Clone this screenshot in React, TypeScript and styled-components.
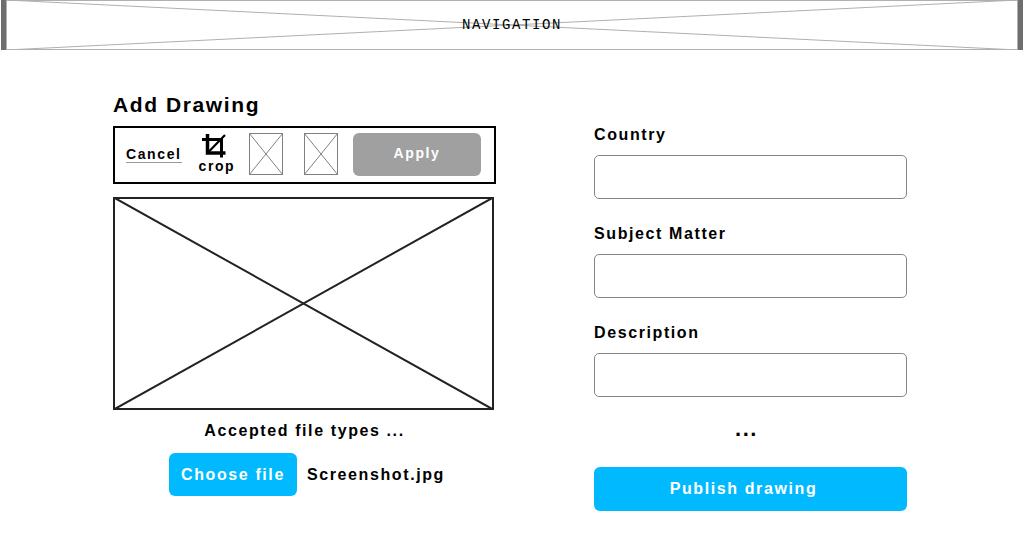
import React from "react";
import styled, { createGlobalStyle } from "styled-components";

const GlobalStyle = createGlobalStyle`
  *, *::before, *::after { box-sizing: border-box; }
  body {
    margin: 0;
    background: #fff;
    color: #000;
    font-family: "Liberation Sans", Arial, Helvetica, sans-serif;
    font-size: 16px;
    font-weight: 700;
    line-height: 20px;
    letter-spacing: 0.1em;
  }
  button, input { font: inherit; letter-spacing: inherit; }
`;

const Navigation = styled.nav`
  display: grid;
  height: 50px;
  margin: 0 1px;
  border: solid #6c6f6e;
  border-width: 0 5px;
`;

const Cross = styled.svg`
  display: block;
  grid-area: 1 / 1;
  width: 100%;
  height: 100%;
`;

const NavTitle = styled.span`
  grid-area: 1 / 1;
  place-self: center;
  font-family: "Liberation Mono", "Courier New", monospace;
  font-size: 14px;
  font-weight: 400;
`;

const Page = styled.main`
  display: grid;
  grid-template-columns: 383fr 313fr;
  gap: 98px;
  padding: 43px 117px 28px 113px;
`;

const Editor = styled.section`
  display: flex;
  flex-direction: column;
`;

const Title = styled.h1`
  margin: 0 0 9px;
  font-size: 21px;
  line-height: 24px;
`;

const Toolbar = styled.div`
  display: flex;
  align-items: center;
  height: 58px;
  padding: 0 13px 2px 11px;
  border: 2px solid #000;
  font-size: 14px;
  line-height: 16px;
`;

const CancelLink = styled.a`
  color: inherit;
  text-decoration: none;
  border-bottom: 1px solid #999;
`;

const CropButton = styled.button`
  display: flex;
  flex-direction: column;
  align-items: flex-start;
  margin-left: 17px;
  padding: 0;
  border: 0;
  background: none;
  color: inherit;

  svg { margin-left: 3px; }
`;

const ToolButton = styled.button`
  width: 34px;
  height: 42px;
  padding: 0;
  border: 0;
  background: none;
`;

const Tools = styled.div`
  display: flex;
  gap: 21px;
  margin-left: 14px;
`;

const Button = styled.button<{ $tone?: string }>`
  min-width: 128px;
  height: 43px;
  padding: 0 12px;
  border: 0;
  border-radius: 6px;
  background: ${(p) => p.$tone ?? "#00b9ff"};
  color: #fff;
  white-space: nowrap;
`;

const ApplyButton = styled(Button)`
  margin-left: auto;
  padding-bottom: 2px;
`;

const PublishButton = styled(Button)`
  height: 44px;
  padding-right: 26px;
`;

const Preview = styled.div`
  height: 213px;
  margin: 13px 2px 0 0;
`;

const Hint = styled.p`
  margin: 11px 0 12px;
  text-align: center;
`;

const FileRow = styled.div`
  display: flex;
  align-items: center;
  gap: 10px;
  padding-left: 56px;
`;

const Form = styled.form`
  display: flex;
  flex-direction: column;
  gap: 25px;
  padding-top: 32px;
`;

const Field = styled.div`
  display: flex;
  flex-direction: column;
  gap: 10px;
`;

const TextInput = styled.input`
  width: 100%;
  height: 44px;
  padding: 0 12px;
  border: 1px solid #858585;
  border-radius: 5px;
  background: #fff;
`;

const More = styled.p`
  margin: 0 0 6px;
  padding-right: 8px;
  font-size: 22px;
  line-height: 14px;
  text-align: center;
`;

const fields = [
  { id: "country", label: "Country" },
  { id: "subject", label: "Subject Matter" },
  { id: "description", label: "Description" },
];

function CrossLines({ color, width = 1 }: { color: string; width?: number }) {
  return (
    <Cross aria-hidden="true" stroke={color} strokeWidth={width} fill="none">
      <line x1="0" y1="0" x2="100%" y2="100%" />
      <line x1="0" y1="100%" x2="100%" y2="0" />
      <rect x="0" y="0" width="100%" height="100%" strokeWidth={width * 2} />
    </Cross>
  );
}

function CropIcon() {
  return (
    <svg width="24" height="24" viewBox="0 0 24 24" fill="none" stroke="#000" aria-hidden="true">
      <path d="M5.500 0V19H23.500" strokeWidth="3.500" />
      <path d="M0 5.500H19.500V23.500" strokeWidth="3" />
      <path d="M6 18.500 23 1" strokeWidth="2.200" />
    </svg>
  );
}

export default function App() {
  return (
    <>
      <GlobalStyle />
      <Navigation>
        <CrossLines color="#b0b0b0" />
        <NavTitle>NAVIGATION</NavTitle>
      </Navigation>
      <Page>
        <Editor>
          <Title>Add Drawing</Title>
          <Toolbar>
            <CancelLink href="#cancel">Cancel</CancelLink>
            <CropButton type="button">
              <CropIcon />
              crop
            </CropButton>
            <Tools>
              <ToolButton type="button" aria-label="Tool one">
                <CrossLines color="#808080" />
              </ToolButton>
              <ToolButton type="button" aria-label="Tool two">
                <CrossLines color="#808080" />
              </ToolButton>
            </Tools>
            <ApplyButton type="button" $tone="#a0a0a0">Apply</ApplyButton>
          </Toolbar>
          <Preview role="img" aria-label="Drawing preview">
            <CrossLines color="#222" width={2} />
          </Preview>
          <Hint>Accepted file types ...</Hint>
          <FileRow>
            <Button type="button">Choose file</Button>
            <span>Screenshot.jpg</span>
          </FileRow>
        </Editor>
        <Form onSubmit={(e) => e.preventDefault()}>
          {fields.map((f) => (
            <Field key={f.id}>
              <label htmlFor={f.id}>{f.label}</label>
              <TextInput id={f.id} type="text" />
            </Field>
          ))}
          <More>...</More>
          <PublishButton type="submit">Publish drawing</PublishButton>
        </Form>
      </Page>
    </>
  );
}
